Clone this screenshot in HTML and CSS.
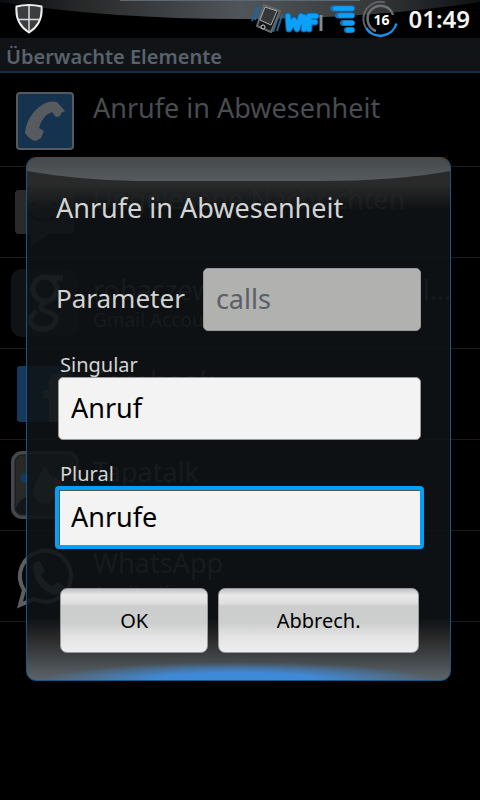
FILE: index.html
```html
<!DOCTYPE html>
<html lang="de">
<head>
<meta charset="utf-8">
<meta name="viewport" content="width=device-width">
<title>Überwachte Elemente</title>
<link rel="stylesheet" href="styles.css">
</head>
<body>
<header class="status">
  <svg class="sheen" viewBox="0 0 480 38" preserveAspectRatio="none" aria-hidden="true">
    <defs>
      <linearGradient id="sheenFill"><stop offset="0" stop-color="#0a0d0f"/><stop offset=".2" stop-color="#2b2d2d"/><stop offset=".5" stop-color="#50555a"/><stop offset=".75" stop-color="#3a3c3c"/><stop offset="1" stop-color="#0d1114"/></linearGradient>
    </defs>
    <path d="M0 2Q110 19 240 19T480 2V0H0z" fill="url(#sheenFill)"/>
    <path d="M120 .5H360" stroke="#5c6874"/>
  </svg>
  <svg class="shield" viewBox="0 0 28 30" aria-hidden="true">
    <path d="M1.500 2.500Q14-.5 26.500 2.500Q28 20 14 28.500Q0 20 1.500 2.500z" fill="#3b3d3f" stroke="#eee" stroke-width="2"/>
    <path d="M14 2V28M3 15.500H25" stroke="#ddd" stroke-width="1.500"/>
  </svg>
  <div class="tray">
    <svg class="vibrate" viewBox="0 0 34 34" aria-hidden="true">
      <path d="M6 5L1 19M9 4L4 18M27 16L22 30M31 13L26 29" stroke="#28648f" stroke-width="2"/>
      <path d="M13 3L29 9L20 30L6 24z" fill="#171a1c" stroke="#666" stroke-width="2" stroke-linejoin="round"/>
      <path d="M14 5L26 9L20 23L9 18z" fill="#34383a" stroke="#aaa"/>
      <circle cx="12" cy="25" r="2" fill="#111" stroke="#ccc"/>
    </svg>
    <svg class="wifi" viewBox="0 0 38 20" aria-hidden="true">
      <path d="M3 3L4 16L9 7L12 16L16 3M19 4V16M24 16V3H31M24 9H30" fill="none" stroke="#0b5c96" stroke-width="7" stroke-linecap="round" stroke-linejoin="round"/>
      <path d="M3 3L4 16L9 7L12 16L16 3M19 4V16M24 16V3H31M24 9H30" fill="none" stroke="#0ca0fa" stroke-width="5" stroke-linecap="round" stroke-linejoin="round"/>
      <path d="M36 2V18" stroke="#888" stroke-width="3"/>
    </svg>
    <svg class="signal" viewBox="0 0 26 30" aria-hidden="true">
      <path d="M4 4.500H23M9 11.500H23M14 19H23M18 26H23" stroke="#1a6db0" stroke-width="6" stroke-linecap="round"/>
      <path d="M6 4.500H23M11 11.500H23M16 19H23M19 26H23" stroke="#0ca0fa" stroke-width="4.500" stroke-linecap="round"/>
    </svg>
    <div class="battery">
      <svg viewBox="0 0 38 38" aria-hidden="true">
        <path d="M23 2.500A17 17 0 0 0 4 28" fill="none" stroke="#5b6167" stroke-width="2"/>
        <path d="M31 15A13 13 0 1 0 14 31" fill="none" stroke="#6c7074" stroke-width="2.500"/>
        <path d="M4 28A17 17 0 0 0 34.500 23.500" fill="none" stroke="#1595ea" stroke-width="2.500"/>
      </svg>
      <span class="level">16</span>
    </div>
    <time class="clock">01:49</time>
  </div>
</header>
<h1 class="bar">Überwachte Elemente</h1>
<ul class="list">
  <li class="row">
    <svg class="icon" viewBox="0 0 68 68" aria-hidden="true">
      <rect x="6" y="6" width="56" height="56" rx="3" fill="#15324f" stroke="#555a60" stroke-width="2"/>
      <path d="M14 46Q16 28 31 18Q38 13 46 15L54 24L50 26Q50 30 45 30L41 25Q31 29 28 41L33 44L30 51L25 54L21 53Q15 48 14 46z" fill="#575b5f"/>
    </svg>
    <div class="text"><h2>Anrufe in Abwesenheit</h2></div>
  </li>
  <li class="row">
    <svg class="icon" viewBox="0 0 68 68" aria-hidden="true">
      <path d="M8 12H59Q63 12 63 16V52Q63 56 59 56H38L20 68V56H8Q4 56 4 52V16Q4 12 8 12z" fill="#292a29"/>
      <path d="M18 26H26M40 26H48M18 36Q33 49 49 36" fill="none" stroke="#111" stroke-width="3"/>
    </svg>
    <div class="text"><h2>Ungelesene Nachrichten</h2></div>
  </li>
  <li class="row">
    <svg class="icon" viewBox="0 0 68 68" aria-hidden="true">
      <rect width="67" height="68" rx="11" fill="#101315"/>
      <g fill="none" stroke="#5a6168" stroke-width="5"><ellipse cx="34" cy="20" rx="12" ry="12"/><path d="M41 9H52M36 32Q24 38 34 42Q49 46 44 54Q37 64 23 58Q14 50 26 42"/></g>
    </svg>
    <div class="text"><h2>robaczewski1@googlemail…</h2><p>Gmail Account</p></div>
  </li>
  <li class="row">
    <svg class="icon" viewBox="0 0 68 68" aria-hidden="true">
      <rect x="6" y="6" width="56" height="56" rx="3" fill="#15385d"/>
      <path d="M38 62V38H32V30H38V23Q38 13 49 13H55V22H51Q47 22 47 26V30H55L54 38H47V62z" fill="#555b62"/>
    </svg>
    <div class="text"><h2>Facebook</h2></div>
  </li>
  <li class="row">
    <svg class="icon" viewBox="0 0 68 68" aria-hidden="true">
      <rect x="2" y="2" width="64" height="64" rx="9" fill="#292a28" stroke="#45484b" stroke-width="4"/>
      <rect x="4" y="4" width="60" height="60" rx="7" fill="none" stroke="#15181a"/>
      <circle cx="14" cy="27" r="5" fill="#15385d"/>
      <path d="M5 56Q10 46 18 46V63H12Q5 63 5 56z" fill="#14171a"/>
      <path d="M33 15L46 33Q46 52 33 53Q21 50 22 38z" fill="#50555b"/>
      <path d="M43 25L56 37Q52 49 42 43z" fill="#64696e"/>
    </svg>
    <div class="text"><h2>Tapatalk</h2></div>
  </li>
  <li class="row">
    <svg class="icon" viewBox="0 0 68 68" aria-hidden="true">
      <path d="M9 63L13 48A25.500 25.500 0 1 1 23 57z" fill="#080a0b" stroke="#5a5e62" stroke-width="4"/>
      <path d="M23 21L29 19L34 29L30 33Q34 41 42 44L46 40L54 45Q50 55 40 52Q24 44 22 27z" fill="#5a5e62"/>
    </svg>
    <div class="text"><h2>WhatsApp</h2><p>Application</p></div>
  </li>
</ul>
<div class="overlay">
  <form class="dialog" role="dialog" aria-labelledby="dialogTitle">
    <svg class="gloss" viewBox="0 0 422 23" preserveAspectRatio="none" aria-hidden="true">
      <defs><linearGradient id="glossFill" x2="0" y2="1"><stop stop-color="#45494a"/><stop offset="1" stop-color="#565b5f"/></linearGradient></defs>
      <path d="M0 0H422V13Q370 23 290 23H110Q50 22 0 13z" fill="url(#glossFill)"/>
    </svg>
    <h2 class="title" id="dialogTitle">Anrufe in Abwesenheit</h2>
    <div class="param">
      <label for="param">Parameter</label>
      <input class="field" id="param" type="text" value="calls" disabled>
    </div>
    <label class="caption" for="singular">Singular</label>
    <input class="field" id="singular" type="text" value="Anruf">
    <label class="caption" for="plural">Plural</label>
    <input class="field active" id="plural" type="text" value="Anrufe">
    <div class="actions">
      <button class="ok" type="submit">OK</button>
      <button class="cancel" type="button">Abbrech.</button>
    </div>
  </form>
</div>
</body>
</html>
```
FILE: styles.css
```css
* { box-sizing: border-box; }
body {
  margin: 0;
  min-height: 100vh;
  position: relative;
  background: #000;
  color: #494c50;
  font-family: "Noto Sans", "Open Sans", sans-serif;
}
h1, h2, p, ul { margin: 0; padding: 0; font-weight: 400; }
svg { display: block; flex: none; }

.status {
  position: relative;
  display: flex;
  align-items: center;
  justify-content: space-between;
  height: 38px;
  padding: 0 10px 0 15px;
}
.sheen { position: absolute; inset: 0; width: 100%; height: 100%; }
.shield { position: relative; width: 28px; height: 30px; }
.tray { position: relative; display: flex; align-items: center; }
.vibrate { width: 34px; height: 34px; }
.wifi { width: 38px; height: 20px; margin-top: 8px; overflow: visible; }
.signal { width: 26px; height: 30px; margin: 0 7px 0 6px; }
.battery { display: grid; place-items: center; width: 38px; height: 38px; }
.battery > * { grid-area: 1 / 1; }
.battery svg { width: 38px; height: 38px; }
.level { color: #fff; font-size: 14px; font-weight: 700; }
.clock { margin-left: 8px; color: #f4f4f4; font-size: 24px; font-weight: 600; line-height: 38px; }

.bar {
  height: 38px;
  padding: 0 6px;
  border-bottom: 3px solid #000;
  background: linear-gradient(#101417 33px, #152c44 33px);
  color: #59626c;
  font-size: 20px;
  font-weight: 600;
  line-height: 38px;
}

.list { list-style: none; }
.row {
  display: flex;
  align-items: center;
  gap: 14px;
  height: 91px;
  padding: 0 20px 0 11px;
  border-bottom: 1px solid #181d22;
}
.icon { width: 68px; height: 68px; }
.text { flex: 1; min-width: 0; align-self: flex-start; padding-top: 14px; }
.text h2 { font-size: 27px; line-height: 36px; white-space: nowrap; }
.text p { font-size: 19px; line-height: 24px; }

.overlay {
  position: absolute;
  inset: 38px 0 0;
  display: flex;
  align-items: center;
  padding: 0 29px 0 26px;
}
.dialog {
  position: relative;
  display: flex;
  flex: 1;
  flex-direction: column;
  min-width: 0;
  padding: 32px 29px 27px 31px;
  overflow: hidden;
  border: 1px solid #1b5580;
  border-radius: 10px;
  background:
    radial-gradient(ellipse 46% 18px at 50% 100%, #3f8ad8 40%, transparent),
    linear-gradient(#292a29 26px, transparent 52px),
    linear-gradient(transparent calc(100% - 62px), #292a29 calc(100% - 42px), #5c646b),
    rgba(15, 19, 22, .87);
  color: #d4d4d4;
}
.gloss { position: absolute; top: 0; left: 0; width: 100%; height: 23px; }
.title { margin: 0 0 42px -2px; font-size: 27px; line-height: 36px; }
.param { display: flex; gap: 18px; margin-left: -2px; font-size: 26px; line-height: 60px; }
.param .field { flex: 1; }
.caption { margin: 22px 0 0 2px; font-size: 20px; line-height: 24px; }
.field {
  width: 100%;
  min-width: 0;
  height: 63px;
  padding: 0 12px 2px;
  border: 1px solid #999;
  border-radius: 5px;
  outline: 0;
  background: #f3f3f3;
  color: #000;
  font: inherit;
  font-size: 27px;
}
.field:disabled { background: #b1b1af; color: #596067; }
.active {
  width: auto;
  margin: 0 -3px;
  border: 4px solid #00a0fb;
  border-radius: 4px;
  box-shadow: inset 1px 1px #555;
}
.actions { display: flex; gap: 10px; margin-top: 39px; padding: 0 2px; }
.actions button {
  height: 65px;
  padding: 0;
  border: 1px solid #999;
  border-radius: 7px;
  background: linear-gradient(#bfc1c0, #e8e8e8 6px, #e0e0e0 14px, #cccecd 17px, #cdcfce 34px, #e4e4e4 48px, #eee);
  color: #000;
  font: inherit;
  font-size: 20px;
}
.ok { flex: 148; }
.cancel { flex: 201; }
```
